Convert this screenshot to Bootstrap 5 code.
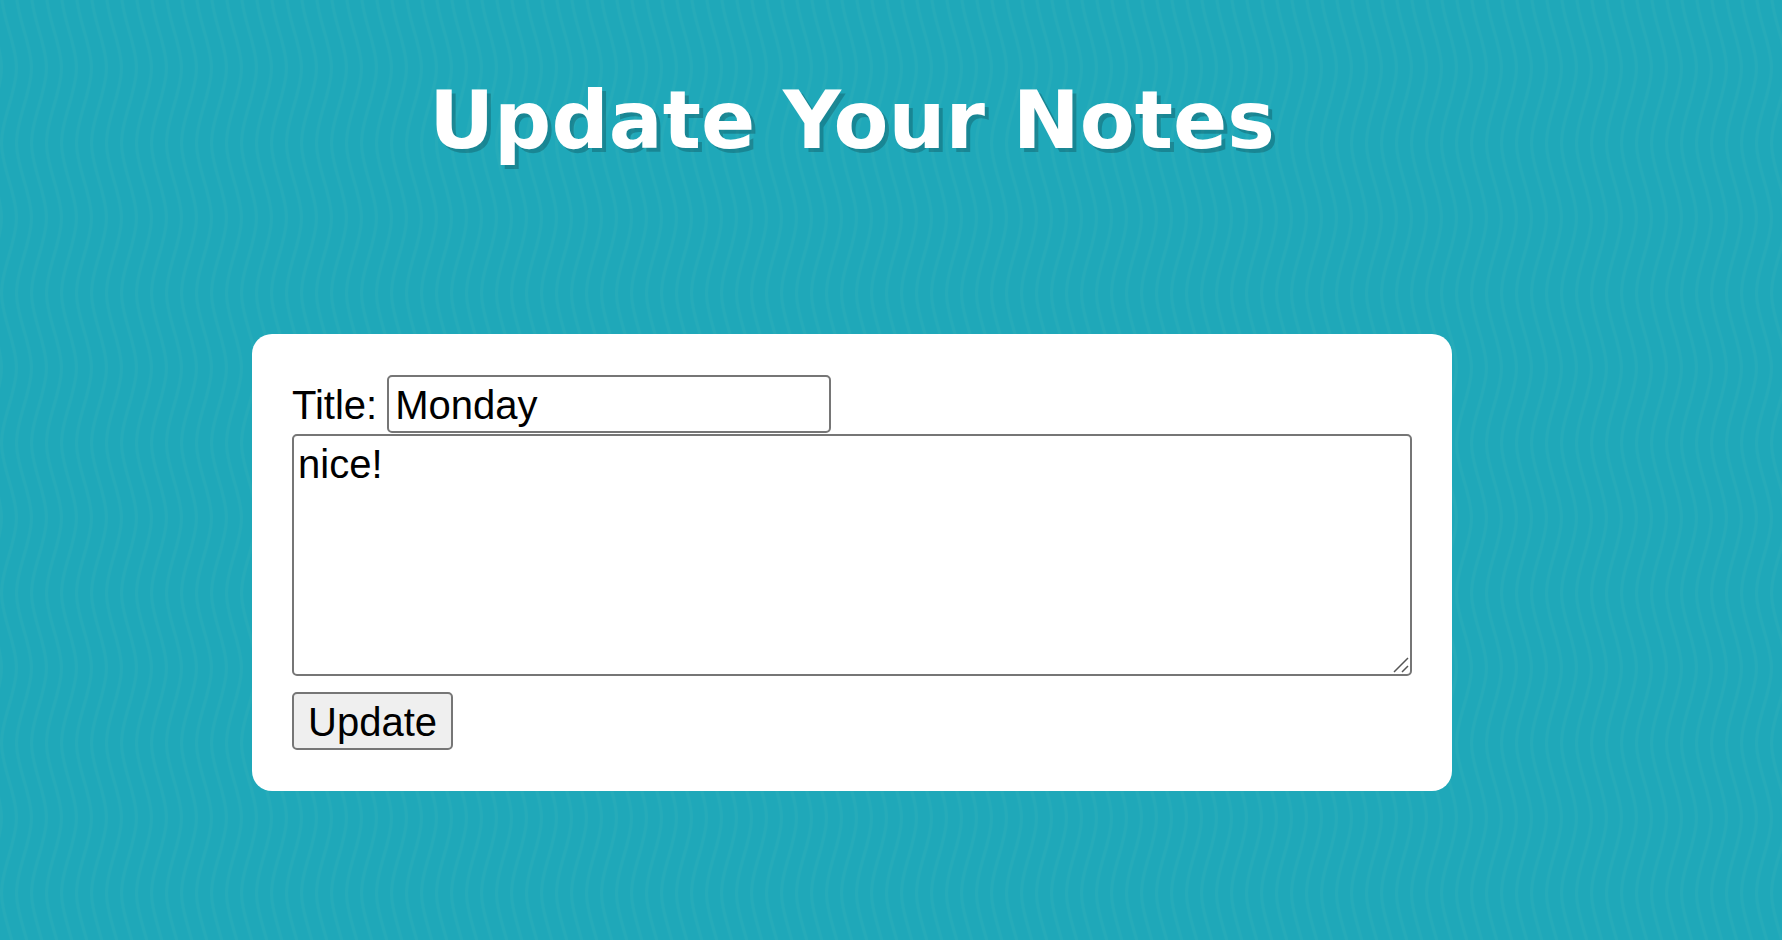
<!DOCTYPE html>
<html lang="en">
<head>
<meta charset="utf-8">
<meta name="viewport" content="width=device-width, initial-scale=1">
<title>Update Your Notes</title>
<link href="https://cdn.jsdelivr.net/npm/bootstrap@5.3.0/dist/css/bootstrap.min.css" rel="stylesheet">
<style>
  body {
    min-height: 100vh;
    padding-right: 78px;
    color: #000;
    font-family: "Liberation Sans", Arial, sans-serif;
    font-size: 40px;
    line-height: 48px;
    background-color: #1fa8b9;
    /* one vertical wave, repeated every 15px */
    background-image: url("data:image/svg+xml,%3Csvg xmlns='http://www.w3.org/2000/svg' viewBox='0 0 15 150' width='15' height='150'%3E%3Cg fill='none' stroke='%2326abb9' stroke-width='3'%3E%3Cpath d='M16.5 -82C16.5 -58 1.5 -31 1.5 -7C1.5 17 16.5 44 16.5 68C16.5 92 1.5 119 1.5 143C1.5 167 16.5 194 16.5 218'/%3E%3Cpath d='M1.5 -82C1.5 -58 -13.5 -31 -13.5 -7C-13.5 17 1.5 44 1.5 68C1.5 92 -13.5 119 -13.5 143'/%3E%3C/g%3E%3C/svg%3E");
  }
  .page-title {
    padding: 73px 0 165px;
    color: #fff;
    font: bold 80px/96px Verdana, "DejaVu Sans", sans-serif;
    text-shadow: 4px 4px 0 rgba(0, 0, 0, .2);
  }
  .note-panel {
    max-width: 1200px;
    padding: 41px 40px;
    border-radius: 20px;
  }
  .note-field, .note-button {
    border: 2px solid #767676;
    border-radius: 5px;
    color: #000;
  }
  .title-row { gap: 10px; padding-bottom: 1px; }
  .title-row label { padding-top: 2px; }
  .note-field { background-color: #fff; }
  .note-title { width: 444px; max-width: 100%; height: 58px; padding: 2px 6px 0; }
  .note-body {
    height: 242px;
    padding: 4px;
    background: #fff url("data:image/svg+xml,%3Csvg xmlns='http://www.w3.org/2000/svg' width='16' height='16'%3E%3Cpath d='M1 15L15 1M9 15L15 9' fill='none' stroke='%23555' stroke-width='1.5'/%3E%3C/svg%3E") no-repeat right 1px bottom 1px;
  }
  .note-body::-webkit-resizer { display: none; }
  .note-button { height: 58px; padding: 2px 14px 0; background: #efefef; }
</style>
</head>
<body>
<main>
  <h1 class="page-title text-center mb-0">Update Your Notes</h1>
  <form class="note-panel bg-white mx-auto" onsubmit="return false">
    <div class="title-row d-flex align-items-center">
      <label for="title">Title:</label>
      <input class="note-field note-title" id="title" type="text" value="Monday">
    </div>
    <textarea class="note-field note-body d-block w-100 mb-3" id="content" aria-label="Note">nice!</textarea>
    <button class="note-button d-block" type="submit">Update</button>
  </form>
</main>
<script src="https://cdn.jsdelivr.net/npm/bootstrap@5.3.0/dist/js/bootstrap.bundle.min.js"></script>
</body>
</html>
